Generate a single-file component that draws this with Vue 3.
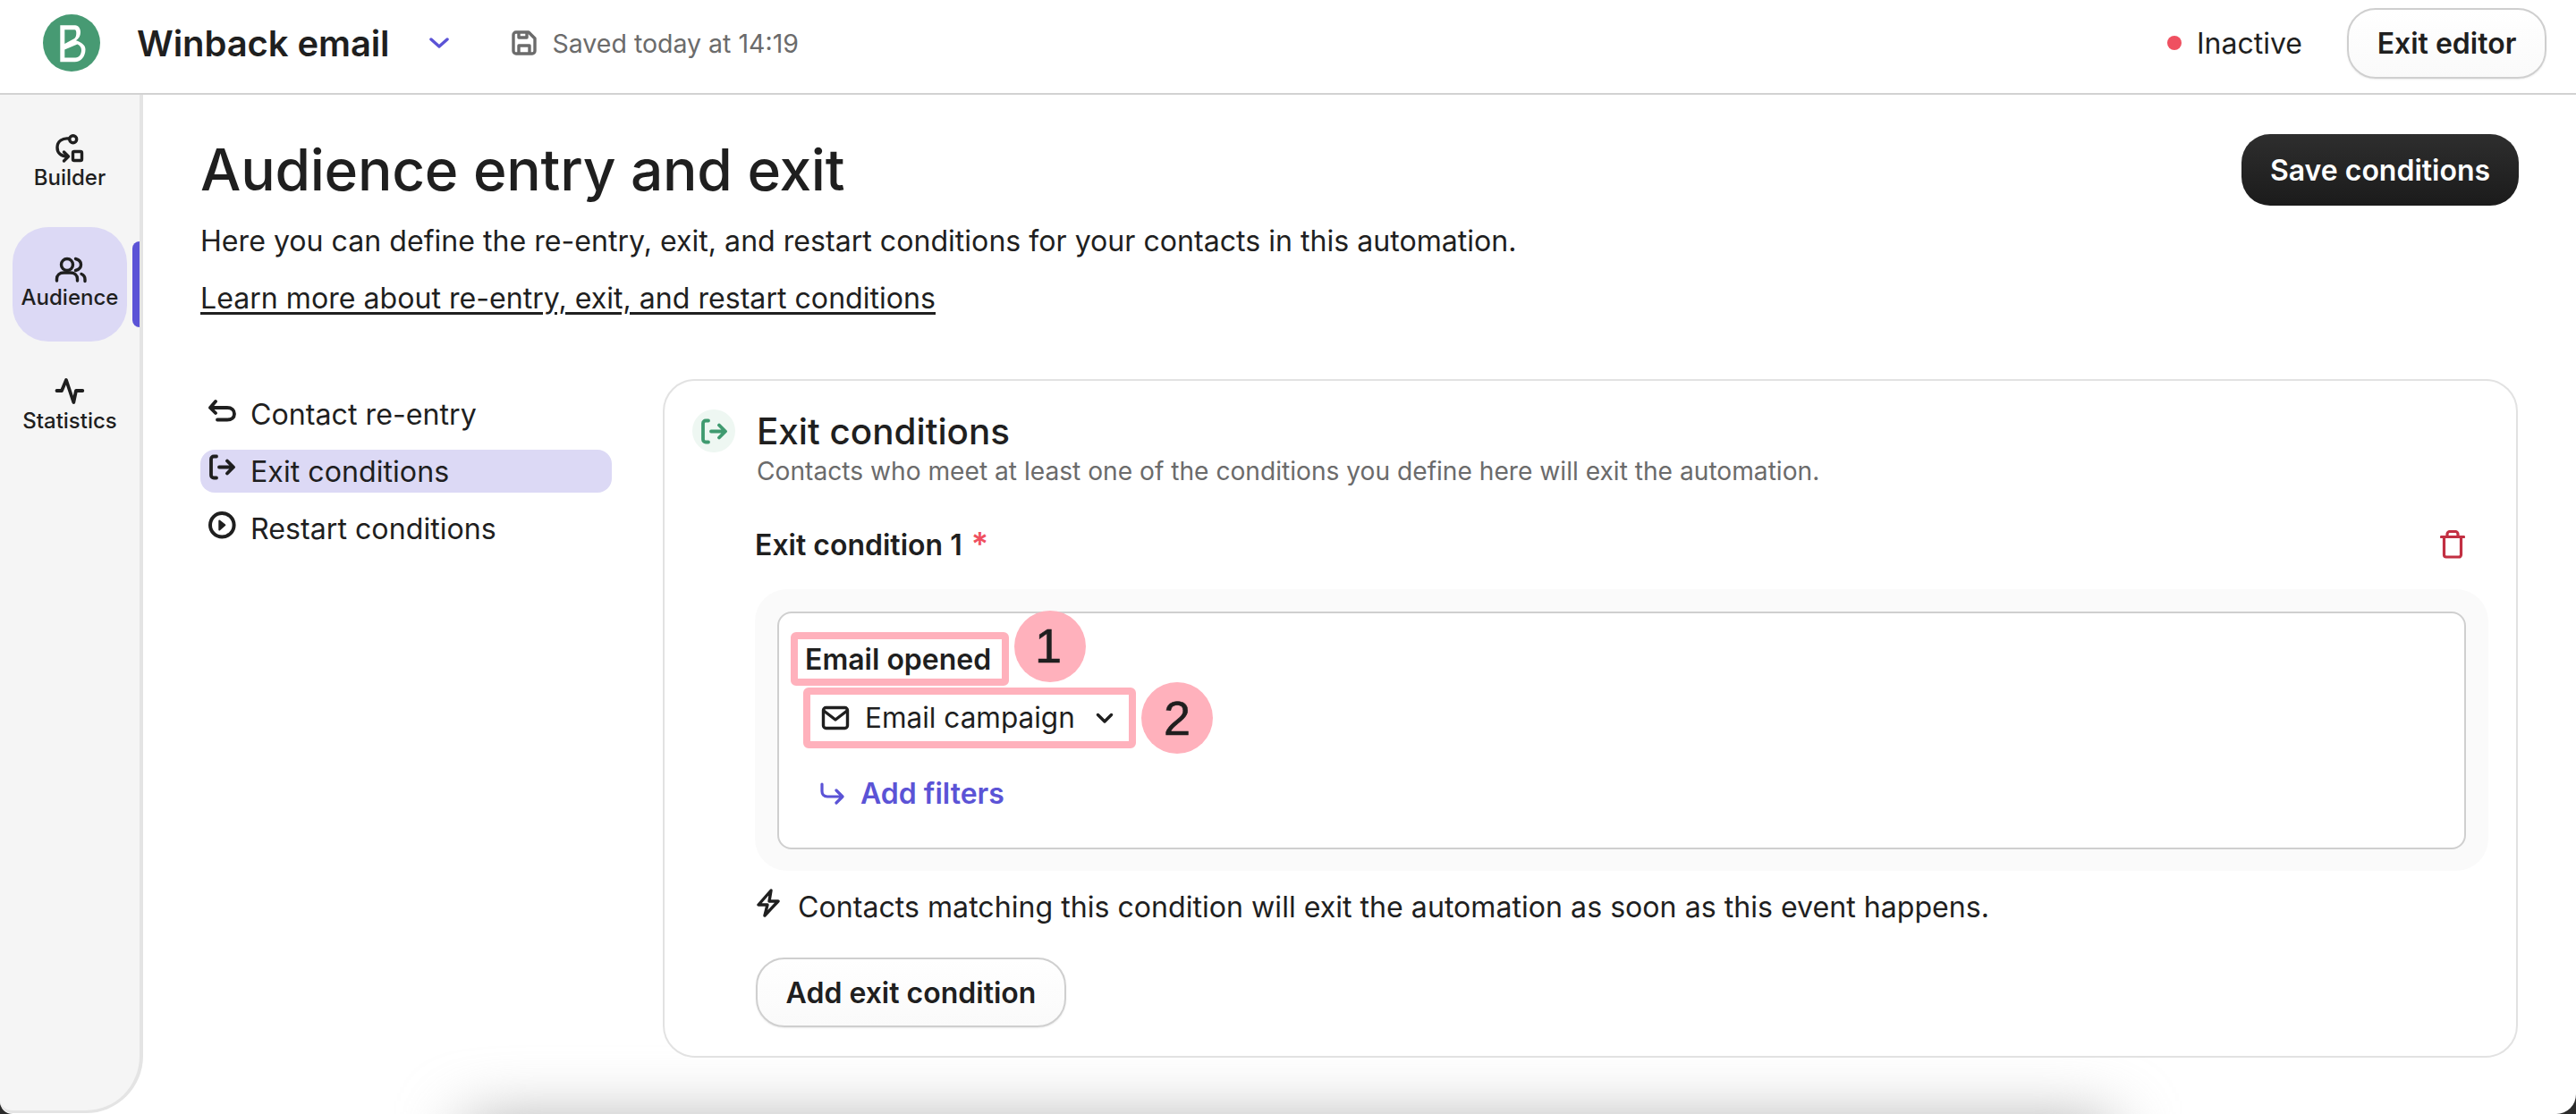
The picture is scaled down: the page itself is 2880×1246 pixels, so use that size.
<script setup>
const navItems = [
  { label: 'Contact re-entry', icon: 'back' },
  { label: 'Exit conditions', icon: 'exit', active: true },
  { label: 'Restart conditions', icon: 'play' },
]
</script>

<template>
  <div class="page">
    <div class="window">
      <header class="topbar">
        <svg class="logo" viewBox="0 0 64 64">
          <circle cx="32" cy="32" r="32" fill="#479a73" />
          <path d="M19.300 12.300H36c4 0 6 4 6 8 0 4-2 7-5 9 6 2 10.500 5 10.500 10 0 8-5 14-12 14H19.300z M24.300 17.300V33l11-6c1.500-1.500 2-3.500 2-6 0-2-.5-3.700-2-3.700z M24.300 39.500V48.500H36.500c4 0 6.500-4 6.500-8.500 0-3-2-5.500-4.500-6.500z" fill="#fff" fill-rule="evenodd" />
        </svg>
        <span class="doc-title">Winback email</span>
        <svg class="doc-chevron" viewBox="0 0 22 12" fill="none">
          <path d="M2 2l9 8 9-8" stroke="#5b53d6" stroke-width="3.400" stroke-linecap="round" stroke-linejoin="round" />
        </svg>
        <svg class="save-icon" viewBox="0 0 28 28" fill="none" stroke="#6b6b6b" stroke-width="3.400">
          <path d="M2 5a3 3 0 0 1 3-3h14l7 7v14a3 3 0 0 1-3 3H5a3 3 0 0 1-3-3z" stroke-linejoin="round" />
          <path d="M8 2v6h9V2M8 26v-9h12v9" stroke-linejoin="round" />
        </svg>
        <span class="saved">Saved today at 14:19</span>
        <div class="topbar-right">
          <span class="dot"></span>
          <span class="status">Inactive</span>
          <button class="btn btn-exit">Exit editor</button>
        </div>
      </header>

      <div class="body">
        <aside class="sidebar">
          <div class="side-item side-builder">
            <svg class="icon-builder" viewBox="60 148 36 36" fill="none" stroke="#1f1f1f" stroke-width="3.400" stroke-linecap="round" stroke-linejoin="round">
              <circle cx="81.700" cy="155.700" r="4" />
              <path d="M77 155C70 154 64 158 64 165C64 171 68 175 76 175M71.500 170L76.500 175L71.500 180" />
              <rect x="81.500" y="169.500" width="10" height="10" rx="1.500" />
            </svg>
            <span>Builder</span>
          </div>
          <div class="side-item side-active">
            <svg class="icon-audience" viewBox="58 286 38 32" fill="none" stroke="#1f1f1f" stroke-width="3.400" stroke-linecap="round" stroke-linejoin="round">
              <circle cx="74" cy="296" r="6.500" />
              <path d="M83.500 289.500c4 1 6 3.500 6 6.500s-2 5.500-6 6.500M62.500 314v-2c0-4 3-7 8-7h7c5 0 8 3 8 7v2M90 306.500c2.500 1 4 3 4 6v2" />
            </svg>
            <span>Audience</span>
            <i class="indicator"></i>
          </div>
          <div class="side-item side-stats">
            <svg class="icon-stats" viewBox="60 422 36 32" fill="none" stroke="#1f1f1f" stroke-width="3.800" stroke-linecap="round" stroke-linejoin="round">
              <path d="M63.500 437H69L74 425L82.300 450L85 437H92.300" />
            </svg>
            <span>Statistics</span>
          </div>
        </aside>

        <main class="main">
          <div class="head-row">
            <h1>Audience entry and exit</h1>
            <button class="btn-dark">Save conditions</button>
          </div>
          <p class="lead">Here you can define the re-entry, exit, and restart conditions for your contacts in this automation.</p>
          <a class="learn">Learn more about re-entry, exit, and restart conditions</a>

          <div class="columns">
            <nav class="subnav">
              <div v-for="item in navItems" :key="item.label" class="subnav-item" :class="{ on: item.active }">
                <svg v-if="item.icon === 'back'" class="subnav-icon" viewBox="0 0 36 36" fill="none" stroke="#1f1f1f" stroke-width="3.800" stroke-linecap="round" stroke-linejoin="round">
                  <path d="M11 8L5 15L11 21M5 15H24C29 15 32 18 32 22C32 26 29 28.500 24 28.500H13" />
                </svg>
                <svg v-else-if="item.icon === 'exit'" class="subnav-icon" viewBox="0 0 36 36" fill="none" stroke="#1f1f1f" stroke-width="3.800" stroke-linecap="round" stroke-linejoin="round">
                  <path d="M12 5.500H9a3 3 0 0 0-3 3V26.500a3 3 0 0 0 3 3H12M15 17.500H30M24 10.500L31 17.500L24 24.500" />
                </svg>
                <svg v-else class="subnav-icon" viewBox="0 0 36 36" fill="none" stroke="#1f1f1f" stroke-width="4" stroke-linejoin="round">
                  <circle cx="18.300" cy="18.300" r="13.300" />
                  <path d="M15.300 13.500L21.300 18.300L15.300 23.500z" fill="#1f1f1f" stroke-width="2" />
                </svg>
                <span>{{ item.label }}</span>
              </div>
            </nav>

            <section class="card">
              <div class="card-head">
                <span class="badge">
                  <svg viewBox="4 3 29 29" fill="none" stroke="#3f9a6f" stroke-width="3.800" stroke-linecap="round" stroke-linejoin="round">
                    <path d="M12 5.500H9a3 3 0 0 0-3 3V26.500a3 3 0 0 0 3 3H12M15 17.500H30M24 10.500L31 17.500L24 24.500" />
                  </svg>
                </span>
                <div>
                  <h2>Exit conditions</h2>
                  <p class="sub">Contacts who meet at least one of the conditions you define here will exit the automation.</p>
                </div>
              </div>

              <div class="cond-label">
                <span>Exit condition 1 <em>*</em></span>
                <svg class="trash" viewBox="0 0 28 32" fill="none" stroke="#c22f42" stroke-width="3.200" stroke-linecap="round" stroke-linejoin="round">
                  <path d="M1.500 7.500H26.500M8 7V4.500A3 3 0 0 1 11 1.500H17A3 3 0 0 1 20 4.500V7M4.500 7.500V27.500A2.500 2.500 0 0 0 7 30H21A2.500 2.500 0 0 0 23.500 27.500V7.500" />
                </svg>
              </div>

              <div class="well">
                <div class="rule">
                  <div class="mark mark-one">
                    Email opened
                    <span class="bubble bubble-one">1</span>
                  </div>
                  <div class="mark mark-two">
                    <svg class="mail" viewBox="0 0 32 28" fill="none" stroke="#1f1f1f" stroke-width="3.400" stroke-linejoin="round">
                      <rect x="2.500" y="2.500" width="27" height="23" rx="3" />
                      <path d="M3 6l13 10L29 6" />
                    </svg>
                    <span class="campaign">Email campaign</span>
                    <svg class="mini-chevron" viewBox="0 0 20 12" fill="none">
                      <path d="M2.500 2.500l7.500 7.500 7.500-7.500" stroke="#1f1f1f" stroke-width="3.400" stroke-linecap="round" stroke-linejoin="round" />
                    </svg>
                    <span class="bubble bubble-two">2</span>
                  </div>
                  <div class="add-filters">
                    <svg viewBox="0 0 28 28" fill="none" stroke="#5b53d6" stroke-width="3.200" stroke-linecap="round" stroke-linejoin="round">
                      <path d="M3 3V11C3 14 5 17 9 17H25M19 10L26 17L19 24" />
                    </svg>
                    <span>Add filters</span>
                  </div>
                </div>
              </div>

              <div class="hint">
                <svg viewBox="0 0 28 32" fill="none" stroke="#1f1f1f" stroke-width="3.400" stroke-linecap="round" stroke-linejoin="round">
                  <path d="M17 2L3 18h10l-3 12 15-16H15z" />
                </svg>
                <span>Contacts matching this condition will exit the automation as soon as this event happens.</span>
              </div>

              <button class="btn btn-add">Add exit condition</button>
            </section>
          </div>
          <div class="glow"></div>
        </main>
      </div>
    </div>
  </div>
</template>

<style>
html, body { margin: 0; padding: 0; background: #2b2b2b; }
</style>

<style scoped>
.page {
  width: 2880px;
  height: 1246px;
  background: #2b2b2b;
  overflow: hidden;
  font-family: Inter, "Liberation Sans", sans-serif;
  color: #1f1f1f;
}
.window {
  height: 1246px;
  background: #fff;
  border-radius: 0 0 22px 14px;
  overflow: hidden;
  display: flex;
  flex-direction: column;
}
.topbar {
  height: 104px;
  box-sizing: content-box;
  border-bottom: 2px solid #d2d2d2;
  display: flex;
  align-items: center;
  padding-left: 48px;
  padding-right: 33px;
  flex: none;
}
.logo { width: 64px; height: 64px; flex: none; margin-top: -8px; }
.doc-title { font-size: 40px; font-weight: 600; margin-left: 41px; letter-spacing: -0.1px; margin-top: -8px; }
.doc-chevron { width: 22px; height: 12px; margin-left: 44px; margin-top: -8px; }
.save-icon { width: 28px; height: 28px; margin-left: 70px; margin-top: -8px; }
.saved { font-size: 28.500px; color: #6b6b6b; margin-left: 18px; margin-top: -8px; }
.topbar-right { margin-left: auto; display: flex; align-items: center; margin-top: -8px; }
.dot { width: 16px; height: 16px; border-radius: 50%; background: #ef5060; }
.status { font-size: 32px; margin-left: 17px; }
.btn {
  font-family: inherit;
  font-weight: 600;
  color: #1f1f1f;
  background: linear-gradient(#fff, #fafafa);
  border: 2px solid #cfcfcf;
  box-shadow: 0 1px 2px rgba(0, 0, 0, .08);
  cursor: pointer;
  padding: 0;
}
.btn-exit { width: 223px; height: 79px; border-radius: 32px; font-size: 32px; margin-left: 50px; }
.body { flex: 1; display: flex; min-height: 0; position: relative; }
.sidebar {
  width: 160px;
  box-sizing: border-box;
  flex: none;
  background: #f5f5f5;
  border-right: 4px solid #e4e4e4;
  border-bottom: 3px solid #e4e4e4;
  border-radius: 0 0 64px 14px;
  height: 1139px;
  position: relative;
  z-index: 2;
  padding-top: 42px;
}
.side-item {
  display: flex;
  flex-direction: column;
  align-items: center;
  font-size: 24px;
  font-weight: 500;
  width: 128px;
  margin-left: 14px;
  box-sizing: border-box;
  position: relative;
}
.side-builder { height: 106px; }
.icon-builder { width: 36px; height: 36px; flex: none; }
.side-active { height: 128px; background: #dcd9f5; border-radius: 40px; padding-top: 32px; }
.icon-audience { width: 38px; height: 32px; flex: none; }
.side-stats { margin-top: 40px; }
.icon-stats { width: 36px; height: 32px; flex: none; margin-bottom: 2px; }
.indicator {
  position: absolute;
  left: 134px;
  top: 16px;
  width: 8px;
  height: 96px;
  background: #5b53d6;
  border-radius: 8px 0 0 8px;
}
.main { flex: 1; position: relative; padding: 0 64px; min-width: 0; }
.head-row { display: flex; justify-content: space-between; box-sizing: border-box; height: 124px; padding-top: 44px; align-items: center; }
h1 { margin: 0; font-size: 64px; font-weight: 500; letter-spacing: -0.25px; line-height: 80px; }
.btn-dark {
  font-family: inherit;
  width: 310px;
  height: 80px;
  border-radius: 32px;
  border: 0;
  background: linear-gradient(#2e2e2e, #1b1b1b);
  color: #fff;
  font-size: 32px;
  font-weight: 600;
  padding: 0;
}
.lead { margin: 10px 0 0; font-size: 32.120px; line-height: 60px; }
.learn { display: block; margin-top: 4px; font-size: 32.120px; line-height: 60px; text-decoration: underline; text-underline-offset: 4px; }
.columns { display: flex; margin-top: 60px; position: relative; z-index: 1; }
.subnav { width: 460px; flex: none; margin-right: 57px; padding-top: 15px; display: flex; flex-direction: column; gap: 16px; }
.subnav-item {
  height: 48px;
  display: flex;
  align-items: center;
  border-radius: 16px;
  font-size: 32.200px;
  padding-left: 6px;
}
.subnav-item.on { background: #dcd9f5; }
.subnav-icon { width: 36px; height: 36px; margin-right: 14px; margin-top: -8px; flex: none; }
.card {
  flex: 1;
  box-sizing: border-box;
  height: 759px;
  border: 2px solid #e2e2e2;
  border-radius: 36px;
  background: #fff;
  padding: 0 31px 0 102px;
  margin-right: 1px;
  position: relative;
}
.card-head { display: flex; margin-left: -71px; padding-top: 32px; }
.badge {
  width: 48px;
  height: 48px;
  border-radius: 50%;
  background: #eef7f2;
  display: flex;
  align-items: center;
  justify-content: center;
  margin-right: 24px;
  flex: none;
}
.badge svg { width: 29px; height: 29px; }
h2 { margin: 0; font-size: 40.400px; font-weight: 500; line-height: 50px; }
.sub { margin: 2px 0 0; color: #6b6b6b; font-size: 28.150px; line-height: 34px; }
.cond-label { display: flex; justify-content: space-between; align-items: center; height: 40px; margin-top: 45px; font-size: 32px; font-weight: 600; margin-left: -1px; padding-right: 26px; }
.cond-label em { color: #ef5060; font-style: normal; font-size: 36px; line-height: 36px; margin-left: 2px; }
.trash { width: 28px; height: 32px; }
.well { background: #fafafa; border-radius: 36px; padding: 25px; margin: 30px 0 0 -1px; height: 315px; box-sizing: border-box; }
.rule { height: 266px; box-sizing: border-box; background: #fff; border: 2px solid #cfcfcf; border-radius: 16px; padding: 21px 13px; }
.mark {
  border: 8px solid #ffb1bc;
  border-radius: 6px;
  box-sizing: border-box;
  position: relative;
  display: flex;
  align-items: center;
}
.mark-one { width: 244px; height: 60px; font-size: 32px; font-weight: 600; padding-left: 8px; white-space: nowrap; }
.mark-two { width: 372px; height: 68px; margin: 2px 0 0 14px; padding-left: 12px; font-size: 31.500px; }
.campaign { margin-top: -2px; }
.bubble {
  position: absolute;
  width: 80px;
  height: 80px;
  border-radius: 50%;
  background: #ffb1bc;
  font-family: "Liberation Sans", sans-serif;
  font-size: 54px;
  font-weight: 400;
  -webkit-text-stroke: 0.6px #1f1f1f;
  display: flex;
  align-items: center;
  justify-content: center;
}
.bubble-one { left: 242px; top: -32px; box-sizing: border-box; padding: 0 4px 2px 0; }
.bubble-two { left: 370px; top: -14px; }
.mail { width: 32px; height: 28px; margin-right: 17px; flex: none; }
.mini-chevron { width: 20px; height: 12px; margin-left: 23px; flex: none; }
.add-filters { display: flex; align-items: center; margin: 31px 0 0 32px; color: #5b53d6; font-size: 32px; font-weight: 600; }
.add-filters svg { width: 28px; height: 28px; margin-right: 18px; }
.hint { display: flex; align-items: center; margin: 18px 0 0 0; font-size: 32.130px; height: 44px; }
.hint svg { width: 28px; height: 32px; margin: -8px 19px 0 0; flex: none; }
.btn-add { width: 347px; height: 78px; border-radius: 32px; font-size: 32px; margin-top: 35px; }
.glow {
  position: absolute;
  left: 360px;
  right: 520px;
  top: 1150px;
  height: 100px;
  background: #a8a8a8;
  filter: blur(36px);
}
</style>
